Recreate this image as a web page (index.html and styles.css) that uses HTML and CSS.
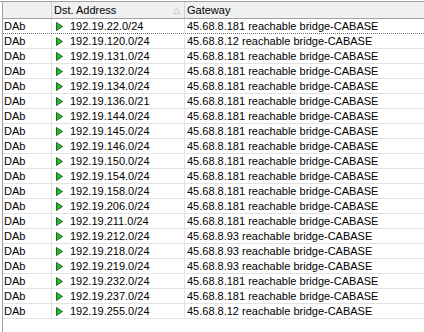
FILE: index.html
```html
<!DOCTYPE html>
<html>
<head>
<meta charset="utf-8">
<link rel="stylesheet" href="styles.css">
</head>
<body>
<div class="frame">
  <div class="list">
    <div class="row head">
      <div class="c c1"></div>
      <div class="c c2">Dst. Address<span class="sort">&#9651;</span></div>
      <div class="c c3">Gateway</div>
    </div>
    <div class="row focus"><div class="c c1">DAb</div><div class="c c2"><svg class="tri" width="7" height="9" viewBox="0 0 7 9"><polygon points="0.5,0.5 6.5,4.5 0.5,8.5" fill="#2fb82f" stroke="#1d6b1d" stroke-width="1"/></svg>192.19.22.0/24</div><div class="c c3">45.68.8.181 reachable bridge-CABASE</div></div>
    <div class="row"><div class="c c1">DAb</div><div class="c c2"><svg class="tri" width="7" height="9" viewBox="0 0 7 9"><polygon points="0.5,0.5 6.5,4.5 0.5,8.5" fill="#2fb82f" stroke="#1d6b1d" stroke-width="1"/></svg>192.19.120.0/24</div><div class="c c3">45.68.8.12 reachable bridge-CABASE</div></div>
    <div class="row"><div class="c c1">DAb</div><div class="c c2"><svg class="tri" width="7" height="9" viewBox="0 0 7 9"><polygon points="0.5,0.5 6.5,4.5 0.5,8.5" fill="#2fb82f" stroke="#1d6b1d" stroke-width="1"/></svg>192.19.131.0/24</div><div class="c c3">45.68.8.181 reachable bridge-CABASE</div></div>
    <div class="row"><div class="c c1">DAb</div><div class="c c2"><svg class="tri" width="7" height="9" viewBox="0 0 7 9"><polygon points="0.5,0.5 6.5,4.5 0.5,8.5" fill="#2fb82f" stroke="#1d6b1d" stroke-width="1"/></svg>192.19.132.0/24</div><div class="c c3">45.68.8.181 reachable bridge-CABASE</div></div>
    <div class="row"><div class="c c1">DAb</div><div class="c c2"><svg class="tri" width="7" height="9" viewBox="0 0 7 9"><polygon points="0.5,0.5 6.5,4.5 0.5,8.5" fill="#2fb82f" stroke="#1d6b1d" stroke-width="1"/></svg>192.19.134.0/24</div><div class="c c3">45.68.8.181 reachable bridge-CABASE</div></div>
    <div class="row"><div class="c c1">DAb</div><div class="c c2"><svg class="tri" width="7" height="9" viewBox="0 0 7 9"><polygon points="0.5,0.5 6.5,4.5 0.5,8.5" fill="#2fb82f" stroke="#1d6b1d" stroke-width="1"/></svg>192.19.136.0/21</div><div class="c c3">45.68.8.181 reachable bridge-CABASE</div></div>
    <div class="row"><div class="c c1">DAb</div><div class="c c2"><svg class="tri" width="7" height="9" viewBox="0 0 7 9"><polygon points="0.5,0.5 6.5,4.5 0.5,8.5" fill="#2fb82f" stroke="#1d6b1d" stroke-width="1"/></svg>192.19.144.0/24</div><div class="c c3">45.68.8.181 reachable bridge-CABASE</div></div>
    <div class="row"><div class="c c1">DAb</div><div class="c c2"><svg class="tri" width="7" height="9" viewBox="0 0 7 9"><polygon points="0.5,0.5 6.5,4.5 0.5,8.5" fill="#2fb82f" stroke="#1d6b1d" stroke-width="1"/></svg>192.19.145.0/24</div><div class="c c3">45.68.8.181 reachable bridge-CABASE</div></div>
    <div class="row"><div class="c c1">DAb</div><div class="c c2"><svg class="tri" width="7" height="9" viewBox="0 0 7 9"><polygon points="0.5,0.5 6.5,4.5 0.5,8.5" fill="#2fb82f" stroke="#1d6b1d" stroke-width="1"/></svg>192.19.146.0/24</div><div class="c c3">45.68.8.181 reachable bridge-CABASE</div></div>
    <div class="row"><div class="c c1">DAb</div><div class="c c2"><svg class="tri" width="7" height="9" viewBox="0 0 7 9"><polygon points="0.5,0.5 6.5,4.5 0.5,8.5" fill="#2fb82f" stroke="#1d6b1d" stroke-width="1"/></svg>192.19.150.0/24</div><div class="c c3">45.68.8.181 reachable bridge-CABASE</div></div>
    <div class="row"><div class="c c1">DAb</div><div class="c c2"><svg class="tri" width="7" height="9" viewBox="0 0 7 9"><polygon points="0.5,0.5 6.5,4.5 0.5,8.5" fill="#2fb82f" stroke="#1d6b1d" stroke-width="1"/></svg>192.19.154.0/24</div><div class="c c3">45.68.8.181 reachable bridge-CABASE</div></div>
    <div class="row"><div class="c c1">DAb</div><div class="c c2"><svg class="tri" width="7" height="9" viewBox="0 0 7 9"><polygon points="0.5,0.5 6.5,4.5 0.5,8.5" fill="#2fb82f" stroke="#1d6b1d" stroke-width="1"/></svg>192.19.158.0/24</div><div class="c c3">45.68.8.181 reachable bridge-CABASE</div></div>
    <div class="row"><div class="c c1">DAb</div><div class="c c2"><svg class="tri" width="7" height="9" viewBox="0 0 7 9"><polygon points="0.5,0.5 6.5,4.5 0.5,8.5" fill="#2fb82f" stroke="#1d6b1d" stroke-width="1"/></svg>192.19.206.0/24</div><div class="c c3">45.68.8.181 reachable bridge-CABASE</div></div>
    <div class="row"><div class="c c1">DAb</div><div class="c c2"><svg class="tri" width="7" height="9" viewBox="0 0 7 9"><polygon points="0.5,0.5 6.5,4.5 0.5,8.5" fill="#2fb82f" stroke="#1d6b1d" stroke-width="1"/></svg>192.19.211.0/24</div><div class="c c3">45.68.8.181 reachable bridge-CABASE</div></div>
    <div class="row"><div class="c c1">DAb</div><div class="c c2"><svg class="tri" width="7" height="9" viewBox="0 0 7 9"><polygon points="0.5,0.5 6.5,4.5 0.5,8.5" fill="#2fb82f" stroke="#1d6b1d" stroke-width="1"/></svg>192.19.212.0/24</div><div class="c c3">45.68.8.93 reachable bridge-CABASE</div></div>
    <div class="row"><div class="c c1">DAb</div><div class="c c2"><svg class="tri" width="7" height="9" viewBox="0 0 7 9"><polygon points="0.5,0.5 6.5,4.5 0.5,8.5" fill="#2fb82f" stroke="#1d6b1d" stroke-width="1"/></svg>192.19.218.0/24</div><div class="c c3">45.68.8.93 reachable bridge-CABASE</div></div>
    <div class="row"><div class="c c1">DAb</div><div class="c c2"><svg class="tri" width="7" height="9" viewBox="0 0 7 9"><polygon points="0.5,0.5 6.5,4.5 0.5,8.5" fill="#2fb82f" stroke="#1d6b1d" stroke-width="1"/></svg>192.19.219.0/24</div><div class="c c3">45.68.8.93 reachable bridge-CABASE</div></div>
    <div class="row"><div class="c c1">DAb</div><div class="c c2"><svg class="tri" width="7" height="9" viewBox="0 0 7 9"><polygon points="0.5,0.5 6.5,4.5 0.5,8.5" fill="#2fb82f" stroke="#1d6b1d" stroke-width="1"/></svg>192.19.232.0/24</div><div class="c c3">45.68.8.181 reachable bridge-CABASE</div></div>
    <div class="row"><div class="c c1">DAb</div><div class="c c2"><svg class="tri" width="7" height="9" viewBox="0 0 7 9"><polygon points="0.5,0.5 6.5,4.5 0.5,8.5" fill="#2fb82f" stroke="#1d6b1d" stroke-width="1"/></svg>192.19.237.0/24</div><div class="c c3">45.68.8.181 reachable bridge-CABASE</div></div>
    <div class="row"><div class="c c1">DAb</div><div class="c c2"><svg class="tri" width="7" height="9" viewBox="0 0 7 9"><polygon points="0.5,0.5 6.5,4.5 0.5,8.5" fill="#2fb82f" stroke="#1d6b1d" stroke-width="1"/></svg>192.19.255.0/24</div><div class="c c3">45.68.8.12 reachable bridge-CABASE</div></div>
  </div>
</div>
</body>
</html>
```
FILE: styles.css
```css
html, body {
  margin: 0;
  padding: 0;
  background: #ffffff;
}
body {
  font-family: "Liberation Sans", Arial, sans-serif;
  font-size: 11px;
  color: #000000;
  height: 332px;
  overflow: hidden;
}
.frame {
  margin-top: 1px;
  border-top: 1px solid #a0a0a0;
  background: #ffffff;
  height: 331px;
}
.list {
  margin-left: 2px;
  border-left: 1px solid #a0a0a0;
  background: #ffffff;
  height: 331px;
}
.row {
  display: grid;
  grid-template-columns: 49px 133px 1fr;
  height: 15px;
  box-sizing: border-box;
  border-bottom: 1px solid #e3e3e3;
}
.row.head {
  height: 17px;
  background: #f0f0f0;
  border-bottom: 1px solid #a0a0a0;
}
.row.focus {
  border-bottom: 1px dotted #707070;
}
.c {
  display: flex;
  align-items: center;
  white-space: nowrap;
  overflow: hidden;
  border-right: 1px solid #e3e3e3;
  line-height: 14px;
}
.head .c {
  border-right-color: #d0d0d0;
  position: relative;
}
.c1 {
  padding-left: 1px;
}
.c2 {
  padding-left: 4px;
}
.c3 {
  padding-left: 2px;
  border-right: none;
}
.head .c2, .head .c3 {
  padding-left: 2px;
}
.tri {
  margin-right: 7px;
  flex: none;
}
.sort {
  position: absolute;
  right: 4px;
  top: 1px;
  font-size: 9px;
  color: #b8b8b8;
}
```
